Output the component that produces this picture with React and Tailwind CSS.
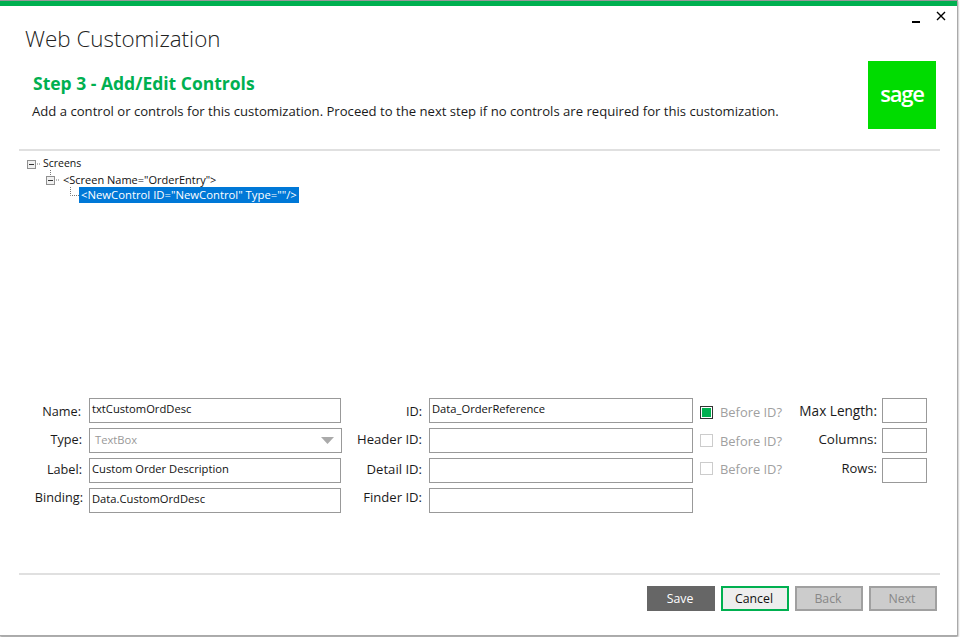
const font = { fontFamily: '"Open Sans", sans-serif' };

function Dots({ width, height, d, className }) {
  return (
    <svg width={width} height={height} className={`overflow-visible shrink-0 ${className || ''}`}>
      <path d={d} stroke="#777" strokeDasharray="1 1" fill="none" />
    </svg>
  );
}

function Minus({ children }) {
  return (
    <svg width="9" height="9" viewBox="0 0 9 9" className="shrink-0 overflow-visible">
      {children}
      <rect x="0.5" y="0.5" width="8" height="8" fill="#f0f0f0" stroke="#8f8f8f" />
      <path d="M2 4.5h5" stroke="#333" />
    </svg>
  );
}

function Field({ value, className }) {
  return (
    <div className={`h-[25px] border border-[#999] bg-white pl-[2px] text-[11.2px] leading-[20px] text-[#111] shrink-0 ${className}`}>{value}</div>
  );
}

function Label({ children, className }) {
  return <div className={`text-right leading-[22px] whitespace-nowrap text-[#1a1a1a] shrink-0 ${className}`}>{children}</div>;
}

function Check({ on, className, textClass }) {
  return (
    <div className="w-[105px] flex items-start pl-[7px] shrink-0">
      <div className={`w-[13px] h-[13px] border flex items-center justify-center shrink-0 ${on ? 'border-[#333]' : 'border-[#ccc]'} ${className}`}>
        {on && <div className="w-[9px] h-[9px] bg-[#00b050]" />}
      </div>
      <span className={`ml-[7px] text-[12.9px] leading-[22px] whitespace-nowrap text-[#a0a0a0] ${textClass}`}>Before ID?</span>
    </div>
  );
}

function Btn({ children, className }) {
  return <div className={`w-[68px] h-[25px] flex items-center justify-center pt-[1px] pr-[2px] text-[12.3px] ${className}`}>{children}</div>;
}

export default function App() {
  return (
    <div className="w-[961px] h-[637px] bg-white overflow-hidden" style={font}>
      <div className="w-[958px] h-[636px] flex flex-col bg-white border-r border-b border-[#aaa] border-t border-t-[#999] shadow-[0_1px_2px_#888]">
        <div className="h-[5px] bg-[#00b050] shrink-0" />
        <div className="h-[143px] shrink-0 pl-[25px] pr-[21px] flex justify-between">
          <div>
            <div className="mt-[17px] text-[22.4px] leading-[32px] font-light text-[#222]">Web Customization</div>
            <div className="mt-[15px] ml-[8px] text-[17.5px] leading-[26px] font-bold text-[#00b050]">Step 3 - Add/Edit Controls</div>
            <div className="mt-[3px] ml-[7px] text-[13.12px] leading-[24px] whitespace-nowrap text-[#1a1a1a]">Add a control or controls for this customization. Proceed to the next step if no controls are required for this customization.</div>
          </div>
          <div className="flex flex-col items-end">
            <div className="h-[55px] -mr-[10px] flex items-start gap-[15px] pt-[3px]">
              <svg width="10" height="14" viewBox="0 0 10 14"><path d="M1 13h8" stroke="#000" strokeWidth="2" /></svg>
              <svg width="10" height="10" viewBox="0 0 10 10" className="mt-[2px]"><path d="M1 1l8 8M9 1l-8 8" stroke="#000" strokeWidth="1.4" /></svg>
            </div>
            <div className="w-[68px] h-[68px] pb-[4px] bg-[#00dc00] flex items-center justify-center text-white text-[22px] font-semibold tracking-[-1.2px]">sage</div>
          </div>
        </div>
        <div className="h-[2px] ml-[19px] mr-[17px] bg-[#e0e0e0] shrink-0" />
        <div className="h-[247px] shrink-0 pl-[27px] pt-[5px] text-[#111]">
          <div className="flex items-center h-[16px] text-[10.5px]">
            <Minus />
            <Dots width="7" height="2" d="M1 1h4" />
            <span>Screens</span>
          </div>
          <div className="flex items-center h-[16px] pl-[19px] text-[11px]">
            <Minus><path d="M4.5 -6v6" stroke="#777" strokeDasharray="1 1" /></Minus>
            <Dots width="8" height="2" d="M1 1h4" />
            <span>&lt;Screen Name="OrderEntry"&gt;</span>
          </div>
          <div className="flex items-start h-[16px] -mt-[1px] pl-[43px] text-[11.3px]">
            <Dots width="9" height="16" d="M0.5 0v8.5h9" />
            <span className="bg-[#0078d7] text-white px-[2px] h-[16px] leading-[16px] w-[220px] whitespace-nowrap">&lt;NewControl ID="NewControl" Type=""/&gt;</span>
          </div>
        </div>
        <div className="flex flex-col gap-[5px] shrink-0">
          <div className="flex h-[25px]">
            <Label className="w-[89px] pr-[8px] pt-[2px] text-[12.7px]">Name:</Label>
            <Field className="w-[252px]" value="txtCustomOrdDesc" />
            <Label className="w-[88px] pr-[7px] pt-[2px] text-[12.7px]">ID:</Label>
            <Field className="w-[264px]" value="Data_OrderReference" />
            <Check on className="mt-[8px]" textClass="mt-[3px]" />
            <Label className="w-[84px] pr-[5px] pt-[2px] text-[13.6px]">Max Length:</Label>
            <Field className="w-[45px]" />
          </div>
          <div className="flex h-[25px]">
            <Label className="w-[89px] pr-[7px] text-[12.7px]">Type:</Label>
            <div className="w-[253px] h-[25px] border border-[#999] bg-white shrink-0 flex items-center justify-between pl-[5px] pr-[7px] text-[11.2px] text-[#999]">
              <span>TextBox</span>
              <svg width="13" height="7" viewBox="0 0 13 7"><path d="M0 0h13L6.5 7z" fill="#aaa" /></svg>
            </div>
            <Label className="w-[87px] pr-[7px] text-[13.1px]">Header ID:</Label>
            <Field className="w-[264px]" />
            <Check className="mt-[6px]" textClass="mt-[2px]" />
            <Label className="w-[84px] pr-[5px] text-[13.4px]">Columns:</Label>
            <Field className="w-[45px]" />
          </div>
          <div className="flex h-[25px]">
            <Label className="w-[89px] pr-[7px] text-[12.7px]">Label:</Label>
            <Field className="w-[252px]" value="Custom Order Description" />
            <Label className="w-[88px] pr-[7px] text-[13.1px]">Detail ID:</Label>
            <Field className="w-[264px]" />
            <Check className="mt-[4px]" textClass="mt-0" />
            <Label className="w-[84px] pr-[5px] -mt-[1px] text-[13px]">Rows:</Label>
            <Field className="w-[45px]" />
          </div>
          <div className="flex h-[25px]">
            <Label className="w-[89px] pr-[6px] -mt-[2px] text-[12.7px]">Binding:</Label>
            <Field className="w-[252px]" value="Data.CustomOrdDesc" />
            <Label className="w-[88px] pr-[7px] -mt-[2px] text-[13.1px]">Finder ID:</Label>
            <Field className="w-[264px]" />
          </div>
        </div>
        <div className="flex-1" />
        <div className="h-[2px] ml-[19px] mr-[17px] bg-[#e0e0e0] shrink-0" />
        <div className="h-[60px] shrink-0 flex justify-end gap-[6px] pt-[11px] pr-[20px]">
          <Btn className="bg-[#666] text-white">Save</Btn>
          <Btn className="bg-[#eee] border-2 border-[#00b050] text-[#111]">Cancel</Btn>
          <Btn className="bg-[#ccc] border-2 border-[#a0a0a0] text-[#888]">Back</Btn>
          <Btn className="bg-[#ccc] border-2 border-[#a0a0a0] text-[#888]">Next</Btn>
        </div>
      </div>
    </div>
  );
}
